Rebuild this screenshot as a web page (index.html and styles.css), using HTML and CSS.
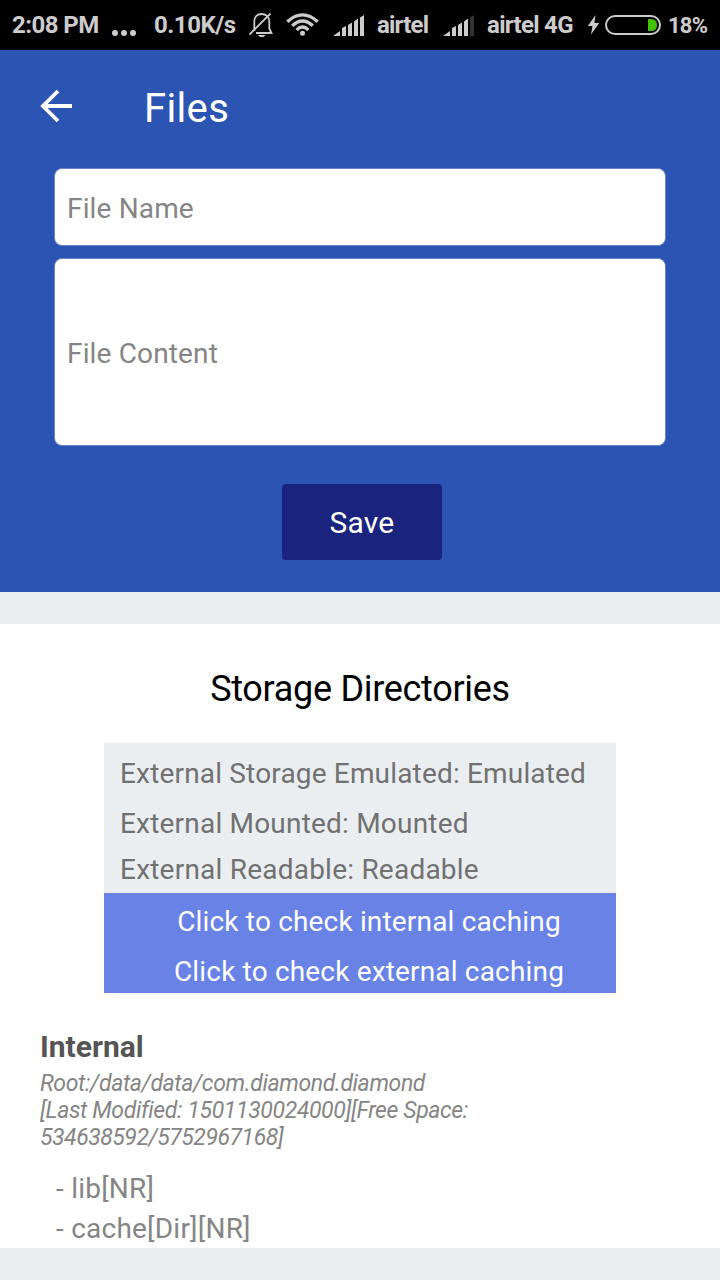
FILE: index.html
```
<!DOCTYPE html>
<html lang="en">
<head>
<meta charset="utf-8">
<title>Files</title>
<link rel="stylesheet" href="styles.css">
</head>
<body>
<div class="status">
  <span class="time">2:08 PM</span>
  <svg class="dots" width="26" height="50" viewBox="0 0 26 50"><circle cx="4" cy="33" r="3"/><circle cx="13" cy="33" r="3"/><circle cx="22" cy="33" r="3"/></svg>
  <span class="rate">0.10K/s</span>
  <svg class="bell" width="26" height="50" viewBox="248 0 26 50"><path d="M254.300 31V21.500C254.300 16.500 257.500 14 261.500 14S269.300 16.500 269.300 21.500V28.500L271.500 33H256" fill="none" stroke="#ccc" stroke-width="1.800"/><path d="M249.500 34.500L270.500 13.500" stroke="#ccc" stroke-width="1.800"/><path d="M258 35H265.500L263.500 37H260Z"/></svg>
  <svg class="wifi" width="34" height="50" viewBox="286 0 34 50"><g fill="none" stroke="#ccc" stroke-width="3.300"><path d="M287.300 21.700Q302.500 8 317.700 21.700"/><path d="M292.200 25.800Q302.500 16 312.800 25.800"/><path d="M296.600 30Q302.500 24.200 308.400 30"/></g><circle cx="302.500" cy="33.200" r="2.500"/></svg>
  <svg class="signal" width="32" height="50" viewBox="0 0 32 50"><path d="M0 36L7 31V36ZM9 28L13 26V36H9ZM15 25L19 22.500V36H15ZM21 21.500L25 18.500V36H21ZM27 17.500L31 15V36H27Z"/></svg>
  <span class="carrier">airtel</span>
  <svg class="signal" width="32" height="50" viewBox="0 0 32 50"><path d="M0 36L7 31V36ZM9 28L13 26V36H9ZM15 25L19 22.500V36H15ZM21 21.500L25 18.500V36H21Z"/><path class="faint" d="M27 17.500L31 15V36H27Z"/></svg>
  <span class="network">airtel 4G</span>
  <svg class="battery" width="76" height="50" viewBox="586 0 76 50"><path d="M595.500 15L587.800 26H592.500L591 34.500L599.300 23H594.400Z"/><rect x="606" y="16" width="54" height="18" rx="9" fill="none" stroke="#ccc" stroke-width="2"/><path class="charge" d="M648 19H651Q657 19 657 25T651 31H648Z"/></svg>
  <span class="percent">18%</span>
</div>
<header class="toolbar">
  <svg class="back" width="34" height="34" viewBox="0 0 34 34"><path d="M32 17H3M18 2L3 17L18 32" fill="none" stroke="#fff" stroke-width="3.800"/></svg>
  <h1 class="title">Files</h1>
</header>
<section class="form">
  <div class="field name"><span>File Name</span></div>
  <div class="field content"><span>File Content</span></div>
  <button class="save"><span>Save</span></button>
</section>
<main class="panel">
  <h2 class="heading"><span>Storage Directories</span></h2>
  <div class="storage">
    <div class="state r1"><span>External Storage Emulated: Emulated</span></div>
    <div class="state r2"><span>External Mounted: Mounted</span></div>
    <div class="state r3"><span>External Readable: Readable</span></div>
    <div class="link"><span>Click to check internal caching</span></div>
    <div class="link"><span>Click to check external caching</span></div>
  </div>
  <h3 class="internal"><span>Internal</span></h3>
  <p class="details"><span>Root:/data/data/com.diamond.diamond</span><br><span>[Last Modified: 1501130024000][Free Space:</span><br><span class="space">534638592/5752967168]</span></p>
  <div class="entry e1"><span>- lib[NR]</span></div>
  <div class="entry"><span>- cache[Dir][NR]</span></div>
</main>
</body>
</html>
```
FILE: styles.css
```
* { box-sizing: border-box; }
body { margin: 0; width: 720px; height: 1280px; overflow: hidden; background: #eaeef1; font-family: Roboto, "Liberation Sans", sans-serif; font-size: 28px; color: #858585; }
h1, h2, h3, p { margin: 0; font-weight: 400; }
span { white-space: nowrap; }
svg { display: block; flex: none; }

.status { display: flex; height: 50px; background: #000; color: #ccc; fill: #ccc; font-size: 24px; font-weight: 700; line-height: 50px; }
.status span { flex: none; }
.time { width: 99px; margin-left: 12px; letter-spacing: -0.55px; }
.rate { width: 94px; margin-left: 17px; letter-spacing: -0.45px; }
.wifi { margin-left: 12px; }
.signal { margin-left: 13px; }
.carrier { width: 57px; margin-left: 12px; letter-spacing: -0.8px; }
.carrier + .signal { margin-left: 9px; }
.network { width: 99px; margin-left: 12px; letter-spacing: -0.7px; }
.percent { margin-left: 6px; font-size: 22px; line-height: 52px; letter-spacing: -0.8px; }
.faint { fill: #333; }
.charge { fill: #43c000; }

.toolbar { display: flex; height: 118px; background: #2c55b3; }
.back { margin: 39px 0 0 40px; }
.title { margin-left: 70px; color: #fff; font-size: 40px; line-height: 118px; letter-spacing: 0.35px; }

.form { display: flex; flex-direction: column; height: 424px; padding: 0 54px; background: #2c55b3; }
.field { flex: none; width: 612px; padding-left: 12px; border: 1px solid #6d86c3; border-radius: 8px; background: #fff; letter-spacing: 0.15px; }
.name { height: 78px; line-height: 79px; }
.content { height: 188px; margin-top: 12px; line-height: 190px; }
.save { width: 160px; height: 76px; margin: 38px 0 0 228px; padding: 0; border: 0; border-radius: 4px; background: #1a237e; color: #fff; font: 30px/78px Roboto, "Liberation Sans", sans-serif; letter-spacing: 0.2px; }

.panel { height: 624px; margin-top: 32px; padding: 40px 40px 0; background: #fff; }
.heading { height: 79px; color: #000; font-size: 36px; line-height: 51px; text-align: center; letter-spacing: -0.3px; }
.storage { width: 512px; margin-left: 64px; color: #717171; background: #eaeef1; }
.state { padding-left: 16px; letter-spacing: 0.17px; }
.r1 { height: 55px; line-height: 61px; }
.r2 { height: 49px; line-height: 51px; letter-spacing: 0.2px; }
.r3 { height: 46px; line-height: 45px; letter-spacing: 0.22px; }
.link { height: 50px; padding-left: 18px; background: #6882e6; color: #fff; line-height: 57px; text-align: center; letter-spacing: 0.17px; }
.internal { height: 36px; margin-top: 36px; color: #555; font-size: 30px; font-weight: 700; line-height: 36px; }
.details { height: 81px; margin-top: 5px; font-size: 23px; font-style: italic; line-height: 27px; letter-spacing: -0.38px; }
.space { letter-spacing: -0.48px; }
.entry { height: 40px; padding-left: 16px; line-height: 40px; letter-spacing: 0.23px; }
.e1 { margin-top: 18px; }
```
